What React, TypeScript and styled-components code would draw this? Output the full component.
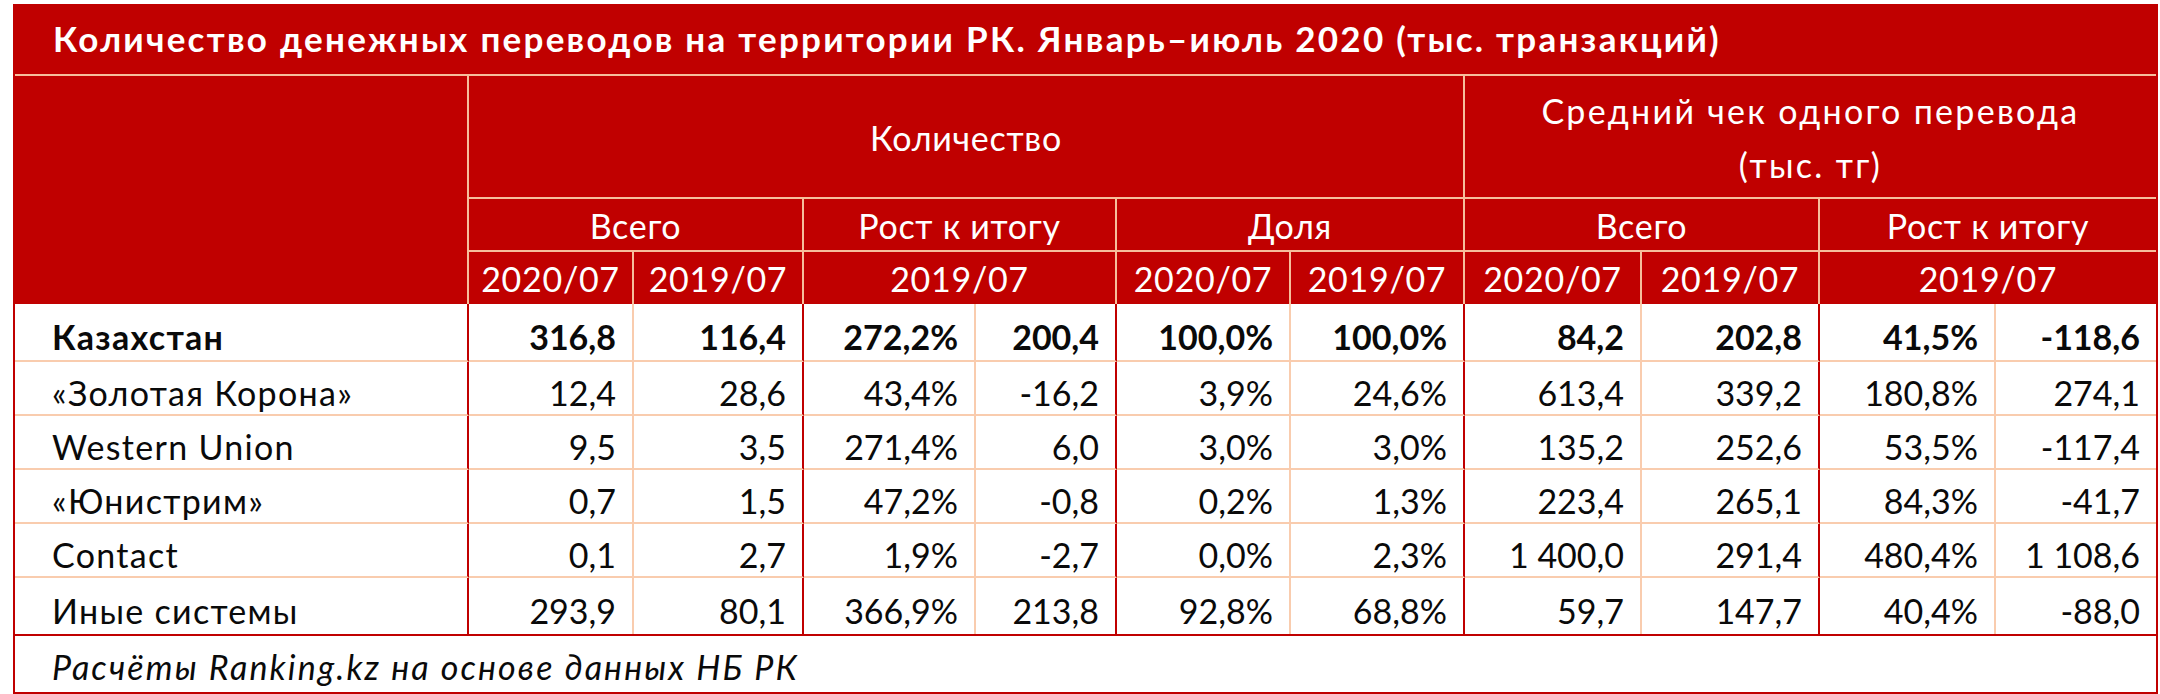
import React from "react";
import styled, { createGlobalStyle, css } from "styled-components";

const RED = "#C00000";
const PEACH_HEAD = "#F6BE9C";
const PEACH_BODY = "#F9CCAE";

const Global = createGlobalStyle`
  html, body { margin: 0; padding: 0; background: #ffffff; }
  body { font-family: Lato, "Noto Sans", "Liberation Sans", sans-serif; }
  * { box-sizing: border-box; }
`;

const Frame = styled.div`
  margin: 4px 0 0 13px;
  width: 2145px;
  border: 2px solid ${RED};
  background: #ffffff;
`;

const TitleBar = styled.div`
  height: 70px;
  background: ${RED};
  color: #ffffff;
  font-weight: 700;
  font-size: 35px;
  display: flex;
  align-items: center;
  padding: 0 0 4px 38px;
  border-bottom: 2px solid ${PEACH_HEAD};
  letter-spacing: 2.25px;
  white-space: nowrap;
`;

const Grid = styled.div`
  display: grid;
  grid-template-columns: 454px 165px 170px 172px 141px 174px 174px 177px 178px 176px 160px;
  grid-template-rows: 123px 53px 52px 58px 54px 54px 54px 54px 56px;
`;

type HeadProps = {
  $col: number;
  $span?: number;
  $row: number;
  $rowSpan?: number;
  $right?: boolean;
  $bottom?: boolean;
  $wide?: boolean;
};

const HeadCell = styled.div<HeadProps>`
  grid-column: ${(p) => p.$col} / span ${(p) => p.$span ?? 1};
  grid-row: ${(p) => p.$row} / span ${(p) => p.$rowSpan ?? 1};
  background: ${RED};
  color: #ffffff;
  font-size: 34px;
  font-weight: 400;
  display: flex;
  flex-direction: column;
  align-items: center;
  justify-content: center;
  text-align: center;
  line-height: 54px;
  letter-spacing: ${(p) => (p.$wide ? "2.3px" : "0.7px")};
  padding-top: 2px;
  white-space: nowrap;
  ${(p) => p.$right && css`border-right: 2px solid ${PEACH_HEAD};`}
  ${(p) => p.$bottom && css`border-bottom: 2px solid ${PEACH_HEAD};`}
`;

type CellProps = {
  $line?: "red" | "peach" | "none";
  $last?: boolean;
  $bold?: boolean;
  $label?: boolean;
};

const Cell = styled.div<CellProps>`
  display: flex;
  align-items: center;
  justify-content: ${(p) => (p.$label ? "flex-start" : "flex-end")};
  padding: 8px ${(p) => (p.$label ? "0" : "16px")} 0 ${(p) => (p.$label ? "37px" : "0")};
  font-size: 34px;
  font-weight: ${(p) => (p.$bold ? 700 : 400)};
  letter-spacing: ${(p) => (p.$label ? "1.3px" : "0")};
  color: #0a0a0a;
  white-space: nowrap;
  border-bottom: ${(p) => (p.$last ? "none" : `2px solid ${PEACH_BODY}`)};
  border-right: ${(p) =>
    p.$line === "red"
      ? `2px solid ${RED}`
      : p.$line === "peach"
      ? `2px solid ${PEACH_BODY}`
      : "none"};
`;

const Footer = styled.div`
  height: 58px;
  border-top: 2px solid ${RED};
  display: flex;
  align-items: center;
  padding: 4px 0 0 37px;
  font-size: 34px;
  font-style: italic;
  letter-spacing: 2.1px;
  color: #0a0a0a;
  white-space: nowrap;
`;

const rows: string[][] = [
  ["Казахстан", "316,8", "116,4", "272,2%", "200,4", "100,0%", "100,0%", "84,2", "202,8", "41,5%", "-118,6"],
  ["«Золотая Корона»", "12,4", "28,6", "43,4%", "-16,2", "3,9%", "24,6%", "613,4", "339,2", "180,8%", "274,1"],
  ["Western Union", "9,5", "3,5", "271,4%", "6,0", "3,0%", "3,0%", "135,2", "252,6", "53,5%", "-117,4"],
  ["«Юнистрим»", "0,7", "1,5", "47,2%", "-0,8", "0,2%", "1,3%", "223,4", "265,1", "84,3%", "-41,7"],
  ["Contact", "0,1", "2,7", "1,9%", "-2,7", "0,0%", "2,3%", "1 400,0", "291,4", "480,4%", "1 108,6"],
  ["Иные системы", "293,9", "80,1", "366,9%", "213,8", "92,8%", "68,8%", "59,7", "147,7", "40,4%", "-88,0"],
];

const lineFor = (i: number): "red" | "peach" | "none" => {
  if (i === 10) return "none";
  return i % 2 === 0 ? "red" : "peach";
};

export default function App() {
  return (
    <>
      <Global />
      <Frame>
        <TitleBar>
          Количество денежных переводов на территории РК. Январь–июль 2020 (тыс. транзакций)
        </TitleBar>
        <Grid>
          <HeadCell $col={1} $row={1} $rowSpan={3} $right />
          <HeadCell $col={2} $span={6} $row={1} $right $bottom>
            Количество
          </HeadCell>
          <HeadCell $col={8} $span={4} $row={1} $bottom $wide>
            <span>Средний чек одного перевода</span>
            <span>(тыс. тг)</span>
          </HeadCell>

          <HeadCell $col={2} $span={2} $row={2} $right $bottom>Всего</HeadCell>
          <HeadCell $col={4} $span={2} $row={2} $right $bottom>Рост к итогу</HeadCell>
          <HeadCell $col={6} $span={2} $row={2} $right $bottom>Доля</HeadCell>
          <HeadCell $col={8} $span={2} $row={2} $right $bottom>Всего</HeadCell>
          <HeadCell $col={10} $span={2} $row={2} $bottom>Рост к итогу</HeadCell>

          <HeadCell $col={2} $row={3} $right>2020/07</HeadCell>
          <HeadCell $col={3} $row={3} $right>2019/07</HeadCell>
          <HeadCell $col={4} $span={2} $row={3} $right>2019/07</HeadCell>
          <HeadCell $col={6} $row={3} $right>2020/07</HeadCell>
          <HeadCell $col={7} $row={3} $right>2019/07</HeadCell>
          <HeadCell $col={8} $row={3} $right>2020/07</HeadCell>
          <HeadCell $col={9} $row={3} $right>2019/07</HeadCell>
          <HeadCell $col={10} $span={2} $row={3}>2019/07</HeadCell>

          {rows.map((r, ri) =>
            r.map((v, ci) => (
              <Cell
                key={`${ri}-${ci}`}
                $label={ci === 0}
                $bold={ri === 0}
                $line={lineFor(ci)}
                $last={ri === rows.length - 1}
              >
                {v}
              </Cell>
            ))
          )}
        </Grid>
        <Footer>Расчёты Ranking.kz на основе данных НБ РК</Footer>
      </Frame>
    </>
  );
}
